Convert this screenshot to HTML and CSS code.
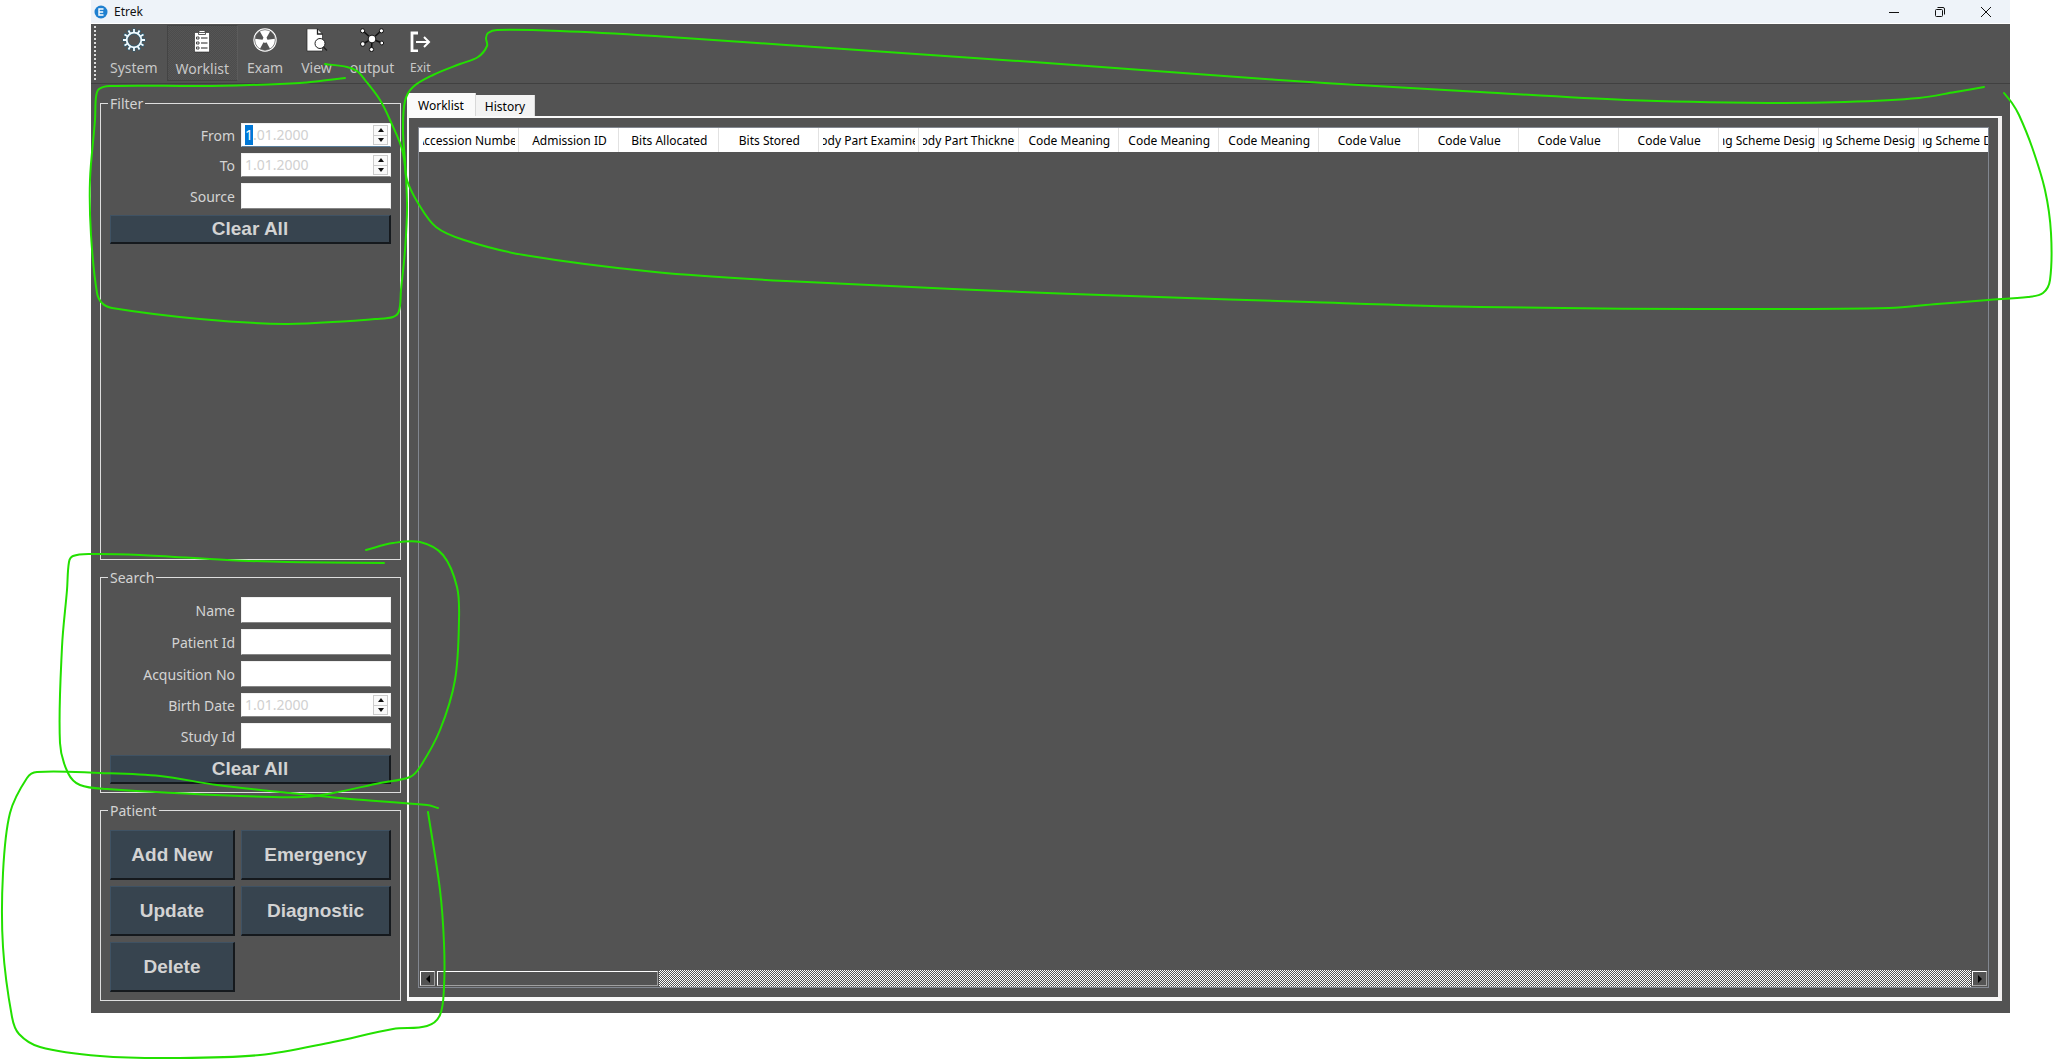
FILE: index.html
```html
<!DOCTYPE html>
<html lang="en">
<head>
<meta charset="utf-8">
<title>Etrek</title>
<link rel="stylesheet" href="styles.css">
</head>
<body>
<div class="window">
  <header class="titlebar">
    <svg class="logo" viewBox="0 0 14 14"><circle cx="7" cy="7" r="6.5" fill="#1f80d0"/><path d="M9.5 4H5v6h4.500M5 7h4.200" fill="none" stroke="#fff" stroke-width="1.400"/></svg>
    <h1 class="title">Etrek</h1>
    <div class="controls">
      <button aria-label="Minimize"><svg viewBox="0 0 12 12"><path d="M1 6.500h10"/></svg></button>
      <button aria-label="Restore"><svg viewBox="0 0 12 12"><rect x="1.500" y="3.500" width="7" height="7" rx="1"/><path d="M3.500 1.500H9Q10.500 1.500 10.500 3v5.500"/></svg></button>
      <button aria-label="Close"><svg viewBox="0 0 12 12"><path d="M1 1l10 10M11 1L1 11"/></svg></button>
    </div>
  </header>

  <nav class="toolbar">
    <span class="handle"></span>
    <button class="tool"><svg viewBox="0 0 24 24"><g fill="none" stroke="#2d6078" stroke-width="3"><circle cx="12" cy="12" r="7.300"/><path d="M12 .5v4M12 19.500v4M.5 12h4M19.500 12h4M6 2l2.200 3.500M15.800 18.500L18 22M2 6l3.500 2.200M18.500 15.800L22 18M18 2l-2.200 3.500M8.200 18.500L6 22M22 6l-3.500 2.200M5.500 15.800L2 18"/></g><g stroke="#f2fbff" fill="none" stroke-width="1.800"><circle cx="12" cy="12" r="7.300"/><path d="M12 1v3.500M12 19.500V23M1 12h3.500M19.500 12H23M6.500 2.500l1.700 3M15.800 18.500l1.700 3M2.500 6.500l3 1.700M18.500 15.800l3 1.700M17.500 2.500l-1.700 3M8.200 18.500l-1.700 3M21.500 6.500l-3 1.700M5.500 15.800l-3 1.700"/></g></svg><span>System</span></button>
    <button class="tool active"><svg viewBox="0 0 24 24"><path d="M4.500 3.500h4l1-2h5l1 2h4V23h-15z" fill="#fff" stroke="#222" stroke-width=".6"/><path d="M8.500 3.500h7v2h-7z" fill="#fff" stroke="#333" stroke-width=".8"/><path d="M11 9h6.500M11 14h6.500M11 19h6.500" stroke="#222" stroke-width="1"/><path d="M6.500 8h2.500v2H6.500zM6.500 13h2.500v2H6.500zM6.500 18h2.500v2H6.500z" fill="#fff" stroke="#222" stroke-width=".8"/></svg><span>Worklist</span></button>
    <button class="tool"><svg viewBox="0 0 24 24"><circle cx="12" cy="12" r="11.700" fill="#fff"/><circle cx="12" cy="12" r="10.300" fill="none" stroke="#666" stroke-width=".8"/><path d="M10.500 9.700L6.800 3.200A10 10 0 0 0 2.100 10.700L9.500 11.700zM13.500 9.700L17.200 3.200A10 10 0 0 1 21.900 10.700L14.500 11.700zM10.500 14.200L7 20.700A10 10 0 0 0 17 20.700L13.500 14.200Q12 15.200 10.500 14.200z" fill="#555"/><circle cx="12" cy="12" r="2" fill="#fff"/></svg><span>Exam</span></button>
    <button class="tool"><svg viewBox="0 0 24 24"><path d="M3 .8h10.500L18.500 6v17H3z" fill="#fff" stroke="#222" stroke-width=".7"/><path d="M13.500.8V6h5" fill="none" stroke="#222" stroke-width="1.300"/><circle cx="16" cy="15.500" r="5" fill="#fff" stroke="#222"/><path d="M19.500 19l3.500 3.500" stroke="#222" stroke-width="1.500"/></svg><span>View</span></button>
    <button class="tool"><svg viewBox="0 0 24 24"><path d="M12 11L3 3M12 11l9-8M12 11l-9.500 5M12 11l10 4M12 11l-.5 10" stroke="#111" stroke-width="1.600"/><g fill="#fff" stroke="#111"><circle cx="12" cy="11" r="3.900"/><circle cx="2.600" cy="2.800" r="2.100"/><circle cx="21.400" cy="2.800" r="2.100"/><circle cx="2.800" cy="16" r="2.300"/><circle cx="21.800" cy="15" r="1.900"/><circle cx="11.500" cy="21.500" r="2.100"/></g></svg><span>output</span></button>
    <button class="tool small"><svg viewBox="0 0 24 24"><path d="M10 5H4v18h6" fill="none" stroke="#fff" stroke-width="2.800"/><path d="M8 14h13M16 9l5 5-5 5" fill="none" stroke="#fff" stroke-width="2"/></svg><span>Exit</span></button>
  </nav>

  <main class="workspace">
    <aside class="sidebar">
      <fieldset class="group filter">
        <legend>Filter</legend>
        <div class="form">
          <label for="from">From</label>
          <div class="date focus"><input id="from" value="1.01.2000"><div class="steps"><button aria-label="Next"></button><button class="down" aria-label="Previous"></button></div></div>
          <label for="to">To</label>
          <div class="date"><input id="to" value="1.01.2000"><div class="steps"><button aria-label="Next"></button><button class="down" aria-label="Previous"></button></div></div>
          <label for="source">Source</label>
          <input class="text" id="source">
          <button class="action wide">Clear All</button>
        </div>
      </fieldset>
      <fieldset class="group">
        <legend>Search</legend>
        <div class="form">
          <label for="name">Name</label>
          <input class="text" id="name">
          <label for="patient">Patient Id</label>
          <input class="text" id="patient">
          <label for="acq">Acqusition No</label>
          <input class="text" id="acq">
          <label for="birth">Birth Date</label>
          <div class="date"><input id="birth" value="1.01.2000"><div class="steps"><button aria-label="Next"></button><button class="down" aria-label="Previous"></button></div></div>
          <label for="study">Study Id</label>
          <input class="text" id="study">
          <button class="action wide">Clear All</button>
        </div>
      </fieldset>
      <fieldset class="group">
        <legend>Patient</legend>
        <div class="form">
          <button class="action tall">Add New</button>
          <button class="action tall">Emergency</button>
          <button class="action tall">Update</button>
          <button class="action tall">Diagnostic</button>
          <button class="action tall">Delete</button>
        </div>
      </fieldset>
    </aside>

    <section class="content">
      <div class="tabs" role="tablist">
        <button class="tab selected" role="tab" aria-selected="true">Worklist</button>
        <button class="tab" role="tab" aria-selected="false">History</button>
      </div>
      <div class="pane">
        <div class="grid-frame">
          <div class="grid-view">
            <table>
              <thead><tr>
                <th><span>Accession Number</span></th><th><span>Admission ID</span></th><th><span>Bits Allocated</span></th><th><span>Bits Stored</span></th><th><span>Body Part Examined</span></th><th><span>Body Part Thickness</span></th><th><span>Code Meaning</span></th><th><span>Code Meaning</span></th><th><span>Code Meaning</span></th><th><span>Code Value</span></th><th><span>Code Value</span></th><th><span>Code Value</span></th><th><span>Code Value</span></th><th><span>Coding Scheme Designator</span></th><th><span>Coding Scheme Designator</span></th><th><span>Coding Scheme Designator</span></th>
              </tr></thead>
            </table>
          </div>
          <div class="scrollbar">
            <button class="arrow" aria-label="Scroll left"><svg viewBox="0 0 4 8"><path d="M4 0v8L0 4z"/></svg></button>
            <div class="thumb"></div>
            <div class="track"></div>
            <button class="arrow" aria-label="Scroll right"><svg viewBox="0 0 4 8"><path d="M0 0v8l4-4z"/></svg></button>
          </div>
        </div>
      </div>
    </section>
  </main>
</div>

<svg class="ink" viewBox="0 0 2053 1060" preserveAspectRatio="none" aria-hidden="true">
  <path data-points="345,78 320,81 300,83 250,85 200,86 110,86 99,89 96,97 95,120 90,180 91,235 97,293 102,303 112,308 200,319 285,324 350,321 375,319 393,317 399,311 401,290 405,250 407,203 403,153 390,120 380,100 365,80 357,71 347,67 325,64"/>
  <path data-points="1984,87 1955,92 1919,98 1845,102 1769,103 1626,100 1480,92 1309,82 1047,63 786,45 655,36 560,31 497,30 488,33 486,38 487,46 478,57 460,64 433,75 413,87 405,101 403,130 405,160 407,180 418,203 436,227 464,240 524,255 655,272 786,281 1047,293 1309,302 1480,307 1700,309 1889,308 1937,304 1988,300 2028,297 2043,293 2050,280 2051,233 2045,190 2032,147 2019,115 2012,103 2004,93"/>
  <path data-points="384,563 287,562 227,560 140,555 90,554 73,556 69,562 67,590 62,647 60,743 68,773 80,785 107,789 240,796 303,797 333,793 380,783 410,777 420,767 440,730 455,680 459,620 457,587 443,555 420,542 393,543 366,550"/>
  <path data-points="438,808 427,805 350,799 290,793 217,785 160,776 100,773 37,772 27,778 10,813 3,873 3,947 12,1017 19,1034 40,1047 100,1056 173,1058 260,1055 333,1042 393,1029 427,1026 440,1015 444,987 444,943 440,890 428,812"/>
</svg>
<script src="script.js"></script>
</body>
</html>
```
FILE: styles.css
```css
* { box-sizing: border-box; }

body {
  margin: 0;
  min-height: 100vh;
  padding: 0 43px 47px 91px;
  position: relative;
  display: flex;
  background: #fff;
  color: #d3d3d3;
  font: 14px/22px "Noto Sans", sans-serif;
}

button, input { font: inherit; margin: 0; padding: 0; border: 0; border-radius: 0; }

.window {
  flex: 1;
  min-width: 0;
  display: flex;
  flex-direction: column;
  background: #535353;
}

/* Title bar */
.titlebar {
  display: flex;
  align-items: center;
  gap: 6px;
  height: 24px;
  padding: 0 1px 0 3px;
  background: #eef3f9;
  border-bottom: 1px solid #fff;
  color: #111;
}
.logo { width: 14px; height: 14px; }
.title { flex: 1; margin: 0; font-size: 12px; font-weight: 400; line-height: 22px; }
.controls { display: flex; }
.controls button { width: 46px; height: 20px; display: grid; place-items: center; background: none; }
.controls svg { width: 12px; height: 12px; fill: none; stroke: #111; }

/* Toolbar */
.toolbar {
  display: flex;
  height: 60px;
  padding: 1px 3px 2px;
  border-bottom: 1px solid #404040;
}
.handle {
  width: 2px;
  margin: 1px 5px 0 0;
  background: repeating-linear-gradient(#dcdcdc 0 2px, transparent 2px 4px);
}
.tool {
  display: flex;
  flex-direction: column;
  align-items: center;
  gap: 5px;
  padding: 3px 9px 0;
  background: none;
  color: #c8c8c8;
}
.tool svg { width: 24px; height: 24px; }
.tool.active {
  padding: 3px 8px 0;
  border: 1px solid #444;
  border-right-color: #5c5c5c;
  background: repeating-conic-gradient(#4c4c4c 0 25%, #555 0 50%) 0 0 / 2px 2px;
}
.tool.small { font-size: 12px; padding: 3px 5px 0; }

/* Workspace */
.workspace {
  flex: 1;
  display: flex;
  gap: 6px;
  padding: 8px 8px 12px 9px;
}
.sidebar {
  width: 301px;
  display: flex;
  flex-direction: column;
  gap: 6px;
}
.group { margin: 0; min-width: 0; padding: 8px 9px; border: 1px solid #dedede; }
.filter { flex: 1; }
.group legend { margin-left: -2px; padding: 0 2px; line-height: 23px; }
.form { display: grid; grid-template-columns: 125px minmax(0, 1fr); gap: 6px; }
.form label { text-align: right; align-self: center; padding-top: 2px; }

.text {
  width: 100%;
  height: 26px;
  padding: 0 4px;
  background: #fff;
  border: 1px solid #f0f0f0;
  border-bottom-color: #868686;
}
.date {
  display: flex;
  height: 24px;
  padding: 1px 2px 1px 3px;
  background: #fff;
  border: 1px solid #f0f0f0;
  border-bottom-color: #868686;
}
.date.focus { border-bottom-color: #5c7f9c; }
.date input { flex: 1; min-width: 0; background: none; color: #d0d0d0; outline: 0; line-height: 20px; }
.date input::selection { background: #0078d7; color: #fff; }
.steps { display: flex; flex-direction: column; width: 15px; border: 1px solid #ccc; }
.steps button { flex: 1; display: grid; place-items: center; background: #fafafa; }
.steps .down { border-top: 1px solid #ccc; }
.steps button::before {
  content: "";
  border: 3px solid transparent;
  border-top-width: 0;
  border-bottom: 4px solid #111;
}
.steps .down::before { border-bottom: 0; border-top: 4px solid #111; }

.action {
  background: #37444f;
  border: 1px solid #3f5263;
  border-right: 2px solid #15191d;
  border-bottom: 2px solid #15191d;
  color: #d3d3d3;
  font: bold 19px/22px "Liberation Sans", sans-serif;
}
.action.wide { grid-column: 1 / -1; height: 29px; }
.action.tall { height: 50px; padding-top: 1px; }

/* Tabs and grid */
.content { flex: 1; min-width: 0; display: flex; flex-direction: column; color: #000; font-size: 12px; }
.tabs { display: flex; align-items: flex-end; height: 24px; padding-top: 1px; }
.tab { height: 21px; padding: 2px 9px 0; background: #f3f3f3; border-right: 1px solid #d8d8d8; line-height: 19px; }
.tab.selected { height: 23px; padding: 2px 11px 0; background: #fafafa; line-height: 21px; }
.pane {
  flex: 1;
  min-width: 0;
  display: flex;
  padding: 9px;
  border: 2px solid #fafafa;
  border-right: 4px solid #f2f0f0;
  border-bottom: 4px solid #f8f8f8;
}
.grid-frame { flex: 1; min-width: 0; display: flex; flex-direction: column; border: 1px solid #828790; }
.grid-view { flex: 1; overflow: hidden; }
table { width: 1600px; table-layout: fixed; border-collapse: collapse; }
th { height: 24px; padding: 2px 3px 0 4px; background: #fff; border-right: 1px solid #e2e2e2; font-weight: 400; line-height: 22px; }
th span { display: flex; justify-content: center; overflow: hidden; white-space: nowrap; }

.scrollbar { display: flex; height: 17px; }
.arrow, .thumb {
  height: 15px;
  margin: 1px;
  background: #535353;
  border: 1px solid #fff;
  border-right-color: #a0a0a0;
  border-bottom-color: #a0a0a0;
}
.arrow { width: 15px; display: grid; place-items: center; }
.arrow svg { width: 4px; height: 8px; }
.thumb { width: 221px; }
.track { flex: 1; background: repeating-conic-gradient(#fff 0 25%, #535353 0 50%) 0 0 / 2px 2px; }

/* Freehand marks over the whole page */
.ink { position: absolute; inset: 0; width: 100%; height: 100%; pointer-events: none; }
.ink path { fill: none; stroke: #23e000; stroke-width: 2; stroke-linecap: round; }
```
FILE: script.js
```js
// Turn each list of pen points into a smooth curve.
document.querySelectorAll('.ink path').forEach(function (path) {
  var p = path.dataset.points.split(' ').map(function (s) { return s.split(',').map(Number); });
  var d = 'M' + p[0];
  for (var i = 0; i < p.length - 1; i++) {
    var a = p[i - 1] || p[i], b = p[i], c = p[i + 1], e = p[i + 2] || c;
    var len = Math.hypot(c[0] - b[0], c[1] - b[1]);
    var t1 = Math.hypot(c[0] - a[0], c[1] - a[1]) || 1;
    var t2 = Math.hypot(e[0] - b[0], e[1] - b[1]) || 1;
    d += 'C' + [
      b[0] + (c[0] - a[0]) / t1 * len / 3, b[1] + (c[1] - a[1]) / t1 * len / 3,
      c[0] - (e[0] - b[0]) / t2 * len / 3, c[1] - (e[1] - b[1]) / t2 * len / 3,
      c[0], c[1]
    ];
  }
  path.setAttribute('d', d);
});

// The first date section starts out selected.
var from = document.getElementById('from');
from.focus();
from.setSelectionRange(0, 1);
```
